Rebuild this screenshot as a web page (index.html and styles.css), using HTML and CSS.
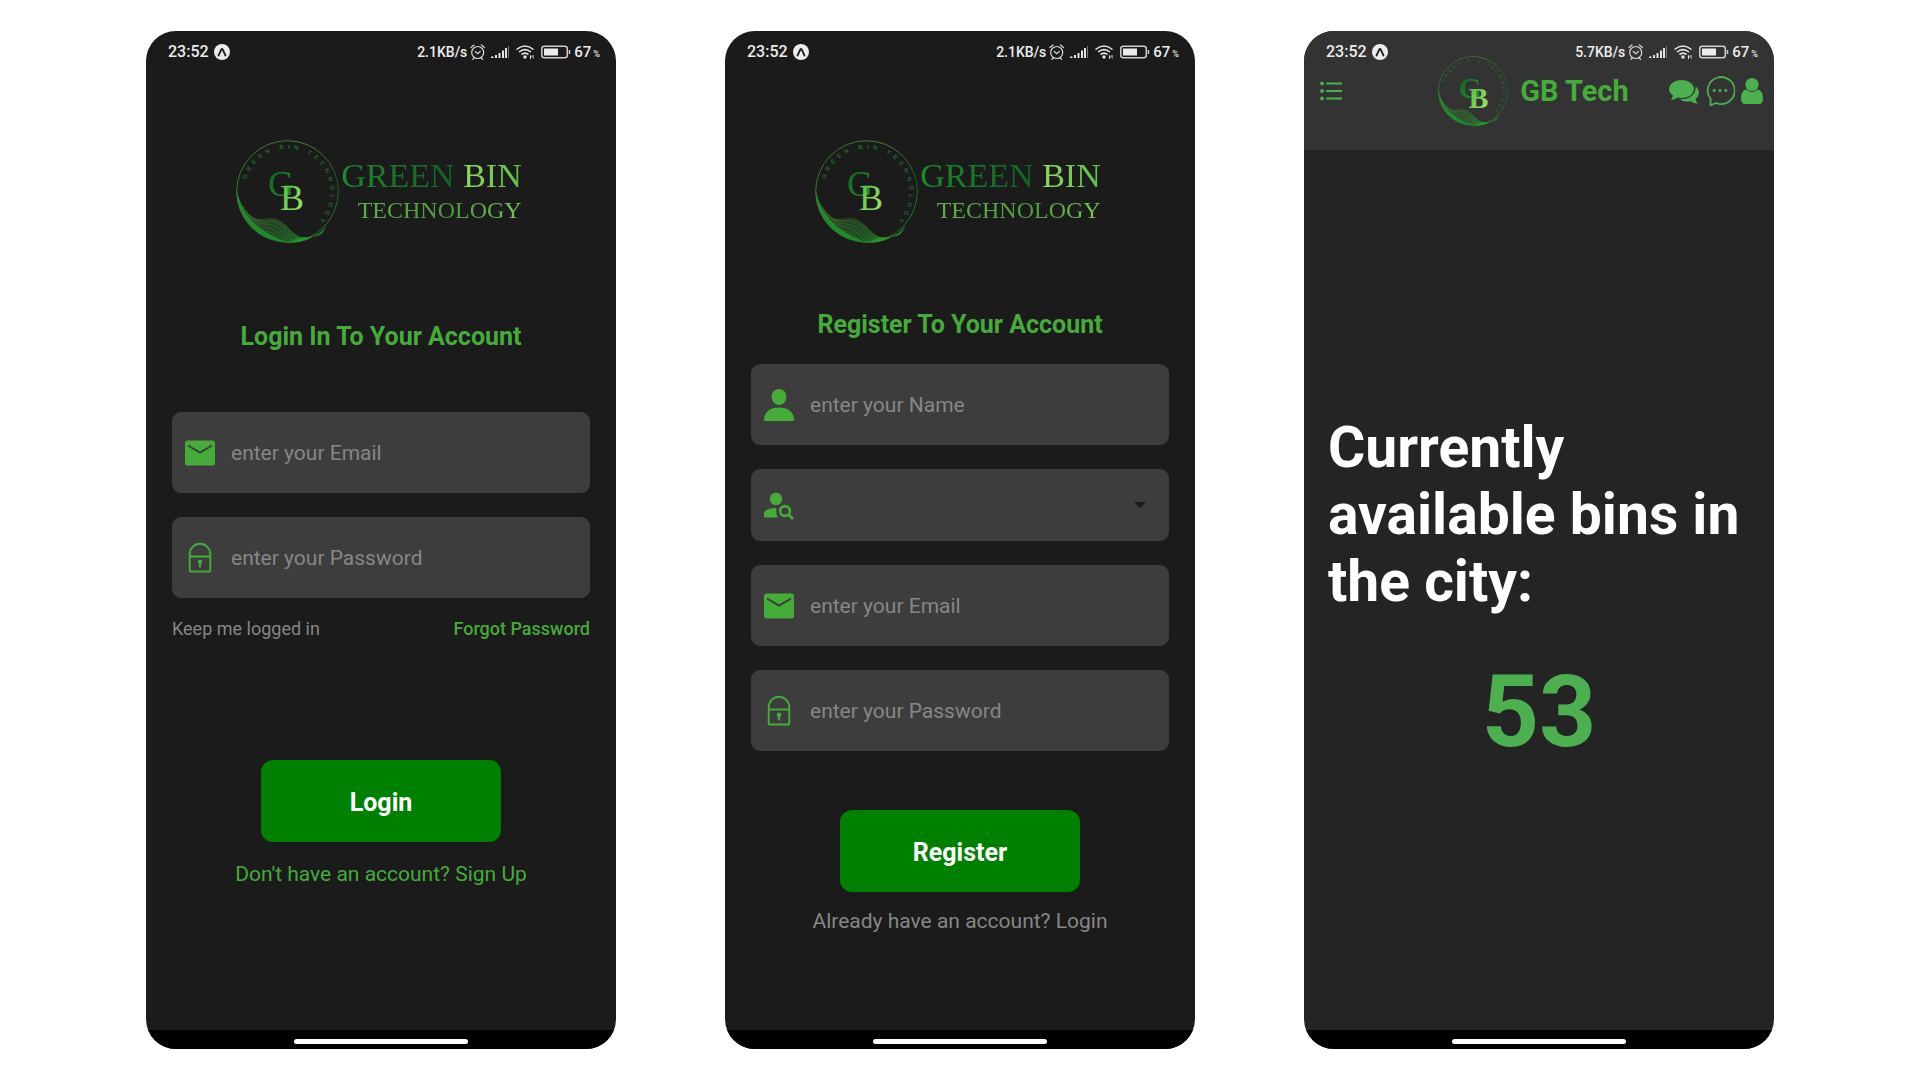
FILE: index.html
```html
<!DOCTYPE html>
<html lang="en">
<head>
<meta charset="utf-8">
<meta name="viewport" content="width=device-width, initial-scale=1">
<title>Green Bin Technology</title>
<link rel="stylesheet" href="styles.css">
</head>
<body>
<svg class="sprite" aria-hidden="true">
  <defs>
    <linearGradient id="ring" x1="0" y1="0" x2="1" y2="1">
      <stop offset="0" stop-color="#2a6a26"/><stop offset=".35" stop-color="#4b8038"/><stop offset=".7" stop-color="#1f5a22"/><stop offset="1" stop-color="#2f8a30"/>
    </linearGradient>
    <linearGradient id="wave" x1="0" y1="0" x2="1" y2="0.6">
      <stop offset="0" stop-color="#1f9a2c"/><stop offset=".4" stop-color="#3c6a30"/><stop offset=".7" stop-color="#2a6d2a"/><stop offset="1" stop-color="#1fa02c"/>
    </linearGradient>
    <linearGradient id="dark" x1="0" y1="0" x2="1" y2="1">
      <stop offset="0" stop-color="#0f5a1d"/><stop offset="1" stop-color="#2c9a34"/>
    </linearGradient>
    <linearGradient id="lime" x1="0" y1="0" x2="1" y2="1">
      <stop offset="0" stop-color="#4fb544"/><stop offset="1" stop-color="#a4ec6a"/>
    </linearGradient>
    <path id="arc" d="M10.200 39.500A43 43 0 1 1 81 83"/>
  </defs>
  <symbol id="emblem" viewBox="0 0 103 103">
    <circle cx="51.500" cy="51.500" r="50.800" fill="none" stroke="url(#ring)" stroke-width="1"/>
    <path d="M.700 50C1 72 14 92 34 99C50 105 66 103 76 97C70 99 64 98 58 93C50 85 44 78 34 79C28 80 22 80 18 78C9 72 3 62 .700 50Z" fill="url(#wave)" opacity=".5"/>
    <g fill="none" stroke="#58a045" stroke-width=".5" opacity=".6">
      <path d="M18 78C24 83 38 72 48 85S66 99 76 97"/>
      <path d="M16 77C24 86 38 75 47 88S64 100 76 97"/>
      <path d="M13 74C24 90 36 79 45 91S62 101 74 98"/>
      <path d="M10 70C22 93 34 83 43 94S60 102 72 99"/>
      <path d="M7 66C20 95 32 88 41 97S58 103 70 100"/>
    </g>
    <path d="M.700 50C1 72 14 92 34 99C40 101 46 102.300 52 102.300C44 100 38 97 30 92C14 82 5 70 .700 50Z" fill="#1f8a2c"/>
    <path d="M52 102.300C62 102.500 70 101 76 97C86 96 88 92 90 86C84 95 76 98 68 97C62 97 60 100 52 102.300Z" fill="#1f9a2c" opacity=".8"/>
  </symbol>
  <symbol id="expo" viewBox="0 0 16 16">
    <circle cx="8" cy="8" r="8" fill="#ececec"/>
    <path d="M4.500 11.500L7.300 5.500Q8 4.300 8.700 5.500L11.500 11.500" fill="none" stroke="#222" stroke-width="1.800" stroke-linecap="round"/>
  </symbol>
  <symbol id="signals" viewBox="0 0 101 18">
    <g fill="none" stroke="#d8d8d8" stroke-width="1.200" stroke-linecap="round">
      <circle cx="7.700" cy="9.500" r="6"/>
      <path d="M1 4.500L4 2M14.400 4.500L11.400 2M5.200 8.500L7.700 10.800L10.200 8.500M4 15L2.800 16.400M11.400 15L12.600 16.400"/>
    </g>
    <g fill="#e4e4e4">
      <path d="M21 13.500h2.500v1.500h-2.500zM25 12h2v3h-2zM28.500 10h2v5h-2zM32 7.500h2v7.500h-2zM35 5h2v10h-2z"/>
      <path d="M38 3h1v12h-1z" fill="#777"/>
      <circle cx="55" cy="14" r="1.700"/>
      <path d="M60.500 12l1.300 2h-.800v2h-1v-4zM62.500 12h1v4l-1.300-2h.300z"/>
    </g>
    <g fill="none" stroke="#e4e4e4" stroke-width="1.600">
      <path d="M46.500 6.500Q55-.500 63.500 6.500M49 9Q55 4.200 61 9M51.500 11.500Q55 8.800 58.500 11.500"/>
    </g>
    <rect x="71.800" y="3.300" width="25.500" height="11.400" rx="2.500" fill="none" stroke="#cfcfcf" stroke-width="1.500"/>
    <path d="M74 5.500h14v7h-14z" fill="#ececec"/>
    <path d="M98.700 7h1.500v4h-1.500z" fill="#cfcfcf"/>
  </symbol>
  <symbol id="mail" viewBox="0 0 30 32">
    <rect y="3.500" width="30" height="25" rx="2.500" fill="#45ac39"/>
    <path d="M3 8.500L15 15.500L27 8.500" fill="none" stroke="#3d3d3d" stroke-width="2"/>
  </symbol>
  <symbol id="lock" viewBox="0 0 30 32">
    <g fill="none" stroke="#45ac39" stroke-width="1.900" stroke-linejoin="round">
      <path d="M4.700 14.500V12.500A10.300 10.700 0 0 1 25.300 12.500V14.500"/>
      <rect x="4.700" y="14.500" width="20.600" height="15" rx=".8"/>
    </g>
    <path d="M15 17.500a2.200 2.200 0 0 1 1.300 4l-.4 4h-1.800l-.4-4a2.200 2.200 0 0 1 1.300-4z" fill="#45ac39"/>
  </symbol>
  <symbol id="person" viewBox="0 0 30 32">
    <ellipse cx="15" cy="8" rx="7.400" ry="8" fill="#45ac39"/>
    <path d="M1.500 32Q0 32 0 30.500C0 23 6.500 18.500 15 18.500S30 23 30 30.500Q30 32 28.500 32Z" fill="#45ac39"/>
  </symbol>
  <symbol id="person-search" viewBox="0 0 30 32">
    <circle cx="12" cy="10" r="6.200" fill="#45ac39"/>
    <path d="M0 28.500V25C0 21 6 18.800 12.500 19Q11.500 24 13.800 28.500Z" fill="#45ac39"/>
    <circle cx="21" cy="22" r="4.900" fill="none" stroke="#45ac39" stroke-width="2.600"/>
    <path d="M24.500 25.500L29 30" stroke="#45ac39" stroke-width="2.800"/>
  </symbol>
</svg>

<main class="stage">
  <section class="phone" aria-label="Login">
    <div class="status">
      <span class="clock">23:52</span>
      <svg class="expo"><use href="#expo"/></svg>
      <span class="rate">2.1KB/s</span>
      <svg class="signals"><use href="#signals"/></svg>
      <span class="battery">67</span><span class="percent">%</span>
    </div>
    <form class="screen screen-login">
      <div class="logo">
        <svg class="emblem" viewBox="0 0 103 103">
          <use href="#emblem"/>
          <text class="ring-text"><textPath href="#arc">GREEN BIN TECHNOLOGY</textPath></text>
          <text class="mono" x="32" y="56" fill="url(#dark)">G</text>
          <text class="mono" x="44" y="70" fill="url(#lime)">B</text>
        </svg>
        <div class="wordmark">
          <div class="word-top"><span class="word-green">GREEN</span> <span class="word-bin">BIN</span></div>
          <div class="word-bottom">TECHNOLOGY</div>
        </div>
      </div>
      <h1 class="title">Login In To Your Account</h1>
      <div class="fields">
        <label class="field"><svg class="icon"><use href="#mail"/></svg><input type="email" placeholder="enter your Email" aria-label="Email"></label>
        <label class="field"><svg class="icon"><use href="#lock"/></svg><input type="password" placeholder="enter your Password" aria-label="Password"></label>
      </div>
      <div class="options"><span>Keep me logged in</span><a href="#">Forgot Password</a></div>
      <button class="submit" type="button">Login</button>
      <a class="switch" href="#">Don't have an account? Sign Up</a>
    </form>
    <div class="navbar"><span class="pill"></span></div>
  </section>

  <section class="phone" aria-label="Register">
    <div class="status">
      <span class="clock">23:52</span>
      <svg class="expo"><use href="#expo"/></svg>
      <span class="rate">2.1KB/s</span>
      <svg class="signals"><use href="#signals"/></svg>
      <span class="battery">67</span><span class="percent">%</span>
    </div>
    <form class="screen screen-register">
      <div class="logo">
        <svg class="emblem" viewBox="0 0 103 103">
          <use href="#emblem"/>
          <text class="ring-text"><textPath href="#arc">GREEN BIN TECHNOLOGY</textPath></text>
          <text class="mono" x="32" y="56" fill="url(#dark)">G</text>
          <text class="mono" x="44" y="70" fill="url(#lime)">B</text>
        </svg>
        <div class="wordmark">
          <div class="word-top"><span class="word-green">GREEN</span> <span class="word-bin">BIN</span></div>
          <div class="word-bottom">TECHNOLOGY</div>
        </div>
      </div>
      <h1 class="title">Register To Your Account</h1>
      <div class="fields">
        <label class="field"><svg class="icon"><use href="#person"/></svg><input type="text" placeholder="enter your Name" aria-label="Name"></label>
        <label class="field field-select"><svg class="icon"><use href="#person-search"/></svg><select aria-label="Account type"><option value=""></option></select><svg class="caret" viewBox="0 0 12 6"><path d="M0 0h12L6 6z" fill="#1b1b1b"/></svg></label>
        <label class="field"><svg class="icon"><use href="#mail"/></svg><input type="email" placeholder="enter your Email" aria-label="Email"></label>
        <label class="field"><svg class="icon"><use href="#lock"/></svg><input type="password" placeholder="enter your Password" aria-label="Password"></label>
      </div>
      <button class="submit" type="button">Register</button>
      <a class="switch" href="#">Already have an account? Login</a>
    </form>
    <div class="navbar"><span class="pill"></span></div>
  </section>

  <section class="phone phone-home" aria-label="Home">
    <header class="top">
      <div class="status">
        <span class="clock">23:52</span>
        <svg class="expo"><use href="#expo"/></svg>
        <span class="rate">5.7KB/s</span>
        <svg class="signals"><use href="#signals"/></svg>
        <span class="battery">67</span><span class="percent">%</span>
      </div>
      <div class="appbar">
        <button class="icon-button" type="button" aria-label="Menu">
          <svg width="22" height="20" viewBox="0 0 22 20" fill="#4caf50"><circle cx="2" cy="2.500" r="1.900"/><circle cx="2" cy="10" r="1.900"/><circle cx="2" cy="17.500" r="1.900"/><path d="M7 2.500h14.500M7 10h14.500M7 17.500h14.500" stroke="#4caf50" stroke-width="2" stroke-linecap="round"/></svg>
        </button>
        <div class="brand">
          <svg class="emblem-small" viewBox="0 0 103 103">
            <use href="#emblem"/>
            <text class="ring-text"><textPath href="#arc">GREEN BIN TECHNOLOGY</textPath></text>
            <text class="mono" x="30" y="62" fill="url(#dark)">G</text>
            <text class="mono" x="45" y="77" fill="url(#lime)">B</text>
          </svg>
          <span>GB Tech</span>
        </div>
        <div class="actions">
          <button class="icon-button" type="button" aria-label="Messages">
            <svg width="30" height="32" viewBox="0 0 30 32" fill="#4caf50"><path d="M12.500 5C19.500 5 25 9 25 14S19.500 23 12.500 23Q10.500 23 8.800 22.600Q5.500 25 1.500 25Q3.700 23 4 20.500Q0 17.800 0 14C0 9 5.500 5 12.500 5Z"/><path d="M26.500 11.500Q30 14 30 17.500Q30 21 26.500 24Q26.800 26.500 29 28.500Q24.500 28.500 21.500 26.200Q15 27.500 10.500 24.300C20 24.800 27.500 19.500 26.500 11.500Z"/></svg>
          </button>
          <button class="icon-button" type="button" aria-label="Chat">
            <svg width="30" height="32" viewBox="0 0 30 32"><path d="M5.500 30.300L5.700 24A13.500 13.500 0 1 1 11 28Z" fill="none" stroke="#4caf50" stroke-width="1.800" stroke-linejoin="round"/><g fill="#4caf50"><circle cx="9.200" cy="15.500" r="1.500"/><circle cx="15" cy="15.500" r="1.500"/><circle cx="20.800" cy="15.500" r="1.500"/></g></svg>
          </button>
          <button class="icon-button" type="button" aria-label="Profile">
            <svg width="22" height="32" viewBox="0 0 22 32" fill="#4caf50"><circle cx="11" cy="9.500" r="6.600"/><path d="M5.500 14.500Q11 19.500 16.500 14.500C20.500 15 22 19 22 24Q22 29 17.500 29H4.500Q0 29 0 24C0 19 1.500 15 5.500 14.500Z"/></svg>
          </button>
        </div>
      </div>
    </header>
    <div class="summary">
      <h2 class="summary-title">Currently available bins in the city:</h2>
      <p class="summary-count">53</p>
    </div>
    <div class="navbar"><span class="pill"></span></div>
  </section>
</main>
</body>
</html>
```
FILE: styles.css
```css
* {
  box-sizing: border-box;
}

body {
  margin: 0;
  background: #fff;
  font-family: Roboto, "Liberation Sans", sans-serif;
}

h1, h2, p {
  margin: 0;
}

a {
  color: inherit;
  text-decoration: none;
}

svg {
  display: block;
  flex: none;
}

.sprite {
  position: absolute;
  width: 0;
  height: 0;
}

.stage {
  display: grid;
  grid-template-columns: repeat(auto-fit, minmax(420px, 1fr));
  gap: 109px;
  min-height: 100vh;
  padding: 31px 146px;
}

.phone {
  display: flex;
  flex-direction: column;
  overflow: hidden;
  border-radius: 30px;
  background: #1b1b1b;
}

.phone-home {
  background: #242424;
}

/* Status bar */
.status {
  display: flex;
  align-items: center;
  height: 29px;
  padding: 13px 16px 0 22px;
  color: #ececec;
  font-weight: 500;
  line-height: 16px;
}

.clock {
  font-size: 16px;
}

.expo {
  width: 16px;
  height: 16px;
  margin-left: 5px;
}

.rate {
  margin-left: auto;
  font-size: 14px;
}

.signals {
  width: 101px;
  height: 18px;
  margin: 0 3px;
}

.battery {
  font-size: 15px;
}

.percent {
  align-self: flex-end;
  margin-left: 2px;
  font-size: 9px;
  line-height: 12px;
}

/* Logo */
.logo {
  display: flex;
  align-items: center;
  gap: 2px;
  padding-right: 4px;
}

.emblem {
  width: 103px;
  height: 103px;
}

.emblem-small {
  width: 70px;
  height: 70px;
}

.ring-text {
  fill: #1f6a27;
  font-family: "Liberation Sans", sans-serif;
  font-size: 6px;
  font-weight: bold;
  letter-spacing: 4px;
}

.mono {
  font-family: "Liberation Serif", serif;
  font-size: 36px;
}

.emblem-small .mono {
  font-size: 44px;
}

.wordmark {
  display: flex;
  flex-direction: column;
  align-items: flex-end;
  gap: 2px;
  padding-top: 2px;
  font-family: "Liberation Serif", serif;
  line-height: 32px;
  white-space: nowrap;
}

.word-top {
  font-size: 34px;
}

.word-green,
.word-bin,
.word-bottom {
  background: linear-gradient(90deg, #1c8a2b, #136022);
  -webkit-background-clip: text;
  background-clip: text;
  color: transparent;
}

.word-bin {
  background-image: linear-gradient(90deg, #8ddb5e, #5fbd4a);
}

.word-bottom {
  background-image: linear-gradient(90deg, #5fae4a, #4f9a40 60%, #7cc95a);
  font-size: 24px;
}

/* Forms */
.screen {
  display: flex;
  flex: 1;
  flex-direction: column;
  align-items: center;
  padding: 80px 26px 24px;
}

.title {
  color: #45ac39;
  font-size: 25px;
  font-weight: 700;
  line-height: 30px;
}

.screen-login .title {
  margin: 79px 0 60px;
}

.screen-register .title {
  margin: 67px 0 24px;
}

.fields {
  display: flex;
  flex-direction: column;
  gap: 24px;
  width: 100%;
}

.field {
  display: flex;
  align-items: center;
  gap: 16px;
  height: 81px;
  padding: 0 13px;
  border-radius: 9px;
  background: #3d3d3d;
}

.field-select {
  height: 72px;
}

.icon {
  width: 30px;
  height: 32px;
}

.field input,
.field select {
  flex: 1;
  min-width: 0;
  height: 100%;
  padding: 0;
  border: 0;
  outline: 0;
  appearance: none;
  background: transparent;
  color: #fff;
  font: 400 21px/24px Roboto, "Liberation Sans", sans-serif;
}

.field input::placeholder {
  color: #868686;
  opacity: 1;
}

.caret {
  width: 12px;
  height: 6px;
  margin-right: 10px;
}

.options {
  display: flex;
  justify-content: space-between;
  width: 100%;
  margin: 20px 0 61px;
  color: #868686;
  font-size: 18px;
  line-height: 22px;
}

.options a {
  color: #45ac39;
  font-weight: 500;
}

.submit {
  width: 240px;
  height: 82px;
  margin-top: 59px;
  padding: 4px 0 0;
  border: 0;
  border-radius: 12px;
  background: #008000;
  color: #fff;
  font: 700 25px/30px Roboto, "Liberation Sans", sans-serif;
}

.switch {
  margin-top: 20px;
  color: #868686;
  font-size: 21px;
  line-height: 24px;
}

.screen-login .switch {
  color: #45ac39;
}

.screen-register .switch {
  margin-top: 17px;
}

/* Home */
.top {
  background: #333;
}

.appbar {
  display: grid;
  grid-template-columns: 1fr auto 1fr;
  align-items: center;
  margin-top: -4px;
  padding: 0 11px 24px 16px;
}

.brand {
  display: flex;
  align-items: center;
  gap: 12px;
  padding-right: 16px;
  color: #45ac39;
  font-size: 29px;
  font-weight: 700;
  white-space: nowrap;
}

.actions {
  display: flex;
  justify-content: flex-end;
  gap: 6px;
}

.icon-button {
  justify-self: start;
  padding: 0;
  border: 0;
  background: none;
}

.summary {
  display: flex;
  flex: 1;
  flex-direction: column;
  justify-content: center;
  gap: 38px;
  padding: 5px 24px 0;
}

.summary-title {
  color: #fff;
  font-size: 57px;
  font-weight: 700;
  line-height: 67px;
}

.summary-count {
  color: #4caf50;
  font-size: 100px;
  font-weight: 700;
  line-height: 118px;
  text-align: center;
}

/* Gesture bar */
.navbar {
  display: flex;
  align-items: center;
  justify-content: center;
  height: 19px;
  padding-top: 4px;
  background: #000;
}

.pill {
  width: 174px;
  height: 5px;
  border-radius: 3px;
  background: #fff;
}
```
